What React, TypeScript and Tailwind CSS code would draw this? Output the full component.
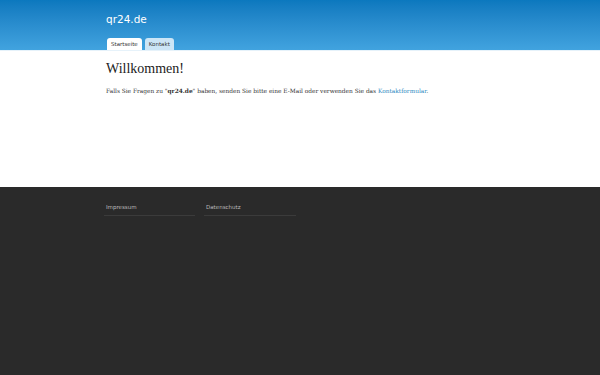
export default function App() {
  return (
    <div className="flex h-[375px] w-[600px] flex-col bg-white font-['DejaVu_Sans',sans-serif]">
      {/* Kopfbereich */}
      <header className="h-[51px] border-b border-[#e6f2fa] bg-gradient-to-b from-[#0b78be] to-[#41a3df]">
        <div className="mx-auto flex h-full w-[392px] flex-col">
          <div className="pl-[2px] pt-[14px] text-[10.5px] leading-none text-white">qr24.de</div>
          <nav className="mt-auto flex gap-[3px] pl-[3px]">
            <div className="rounded-t-[3px] bg-white px-[4px] pb-[3px] pt-[4px] text-[5.5px] leading-none text-[#333]">
              Startseite
            </div>
            <div className="rounded-t-[3px] bg-[#cce5f6] px-[4px] pb-[3px] pt-[4px] text-[5.5px] leading-none text-[#333]">
              Kontakt
            </div>
          </nav>
        </div>
      </header>

      {/* Inhalt */}
      <main className="h-[136px] font-['DejaVu_Serif',serif] text-[#222]">
        <div className="mx-auto w-[392px] pl-[2px]">
          <h1 className="pt-[11px] font-['Liberation_Serif',serif] text-[14px] leading-none">Willkommen!</h1>
          <p className="pt-[13px] text-[5.85px] leading-none text-[#333]">
            Falls Sie Fragen zu "<b>qr24.de</b>" baben, senden Sie bitte eine E-Mail oder verwenden Sie das{' '}
            <span className="text-[#2a87c0]">Kontaktformular</span>.
          </p>
        </div>
      </main>

      {/* Fußbereich */}
      <footer className="flex-1 bg-[#2a2a2a]">
        <div className="mx-auto flex w-[392px] gap-[9px] pt-[18px]">
          <div className="w-[91px] border-b border-[#3b3b3b] pb-[4px] pl-[2px] text-[5.5px] leading-none text-[#bbb]">
            Impressum
          </div>
          <div className="w-[92px] border-b border-[#3b3b3b] pb-[4px] pl-[2px] text-[5.5px] leading-none text-[#bbb]">
            Datenschutz
          </div>
        </div>
      </footer>
    </div>
  );
}
